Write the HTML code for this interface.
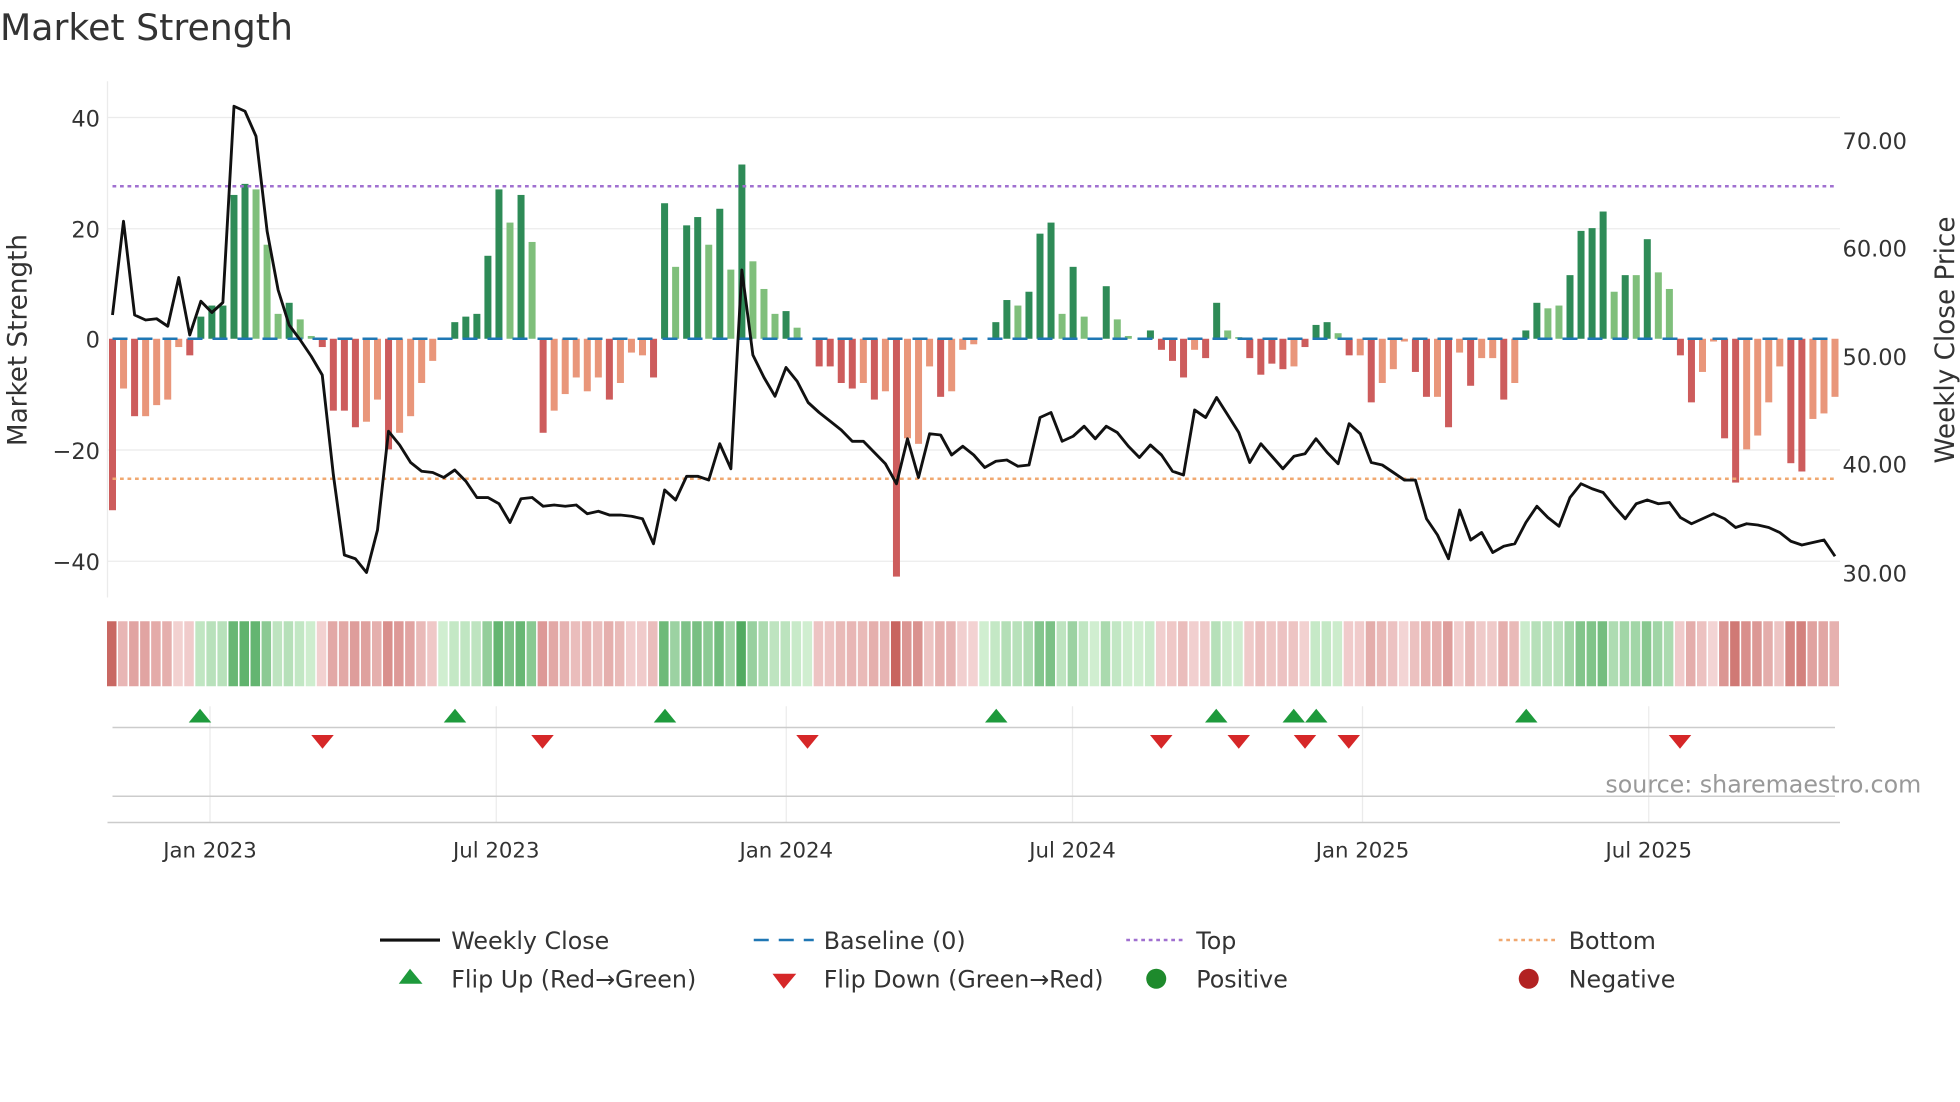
<!DOCTYPE html>
<html><head><meta charset="utf-8"><style>
html,body{margin:0;padding:0;background:#fff;}
svg{display:block;font-family:"DejaVu Sans","Liberation Sans",sans-serif;}
</style></head><body>
<svg id="s" width="1960" height="1102" viewBox="0 0 1568 881.6" xmlns="http://www.w3.org/2000/svg">
<rect width="1568" height="882" fill="#fff"/>
<text x="0" y="32" font-size="29" fill="#333">Market Strength</text>
<g stroke="#ebebeb" stroke-width="1">
<line x1="86" y1="94" x2="1472" y2="94"/><line x1="86" y1="183" x2="1472" y2="183"/>
<line x1="86" y1="360" x2="1472" y2="360"/><line x1="86" y1="449" x2="1472" y2="449"/>
<line x1="86" y1="65" x2="86" y2="478"/>
</g>
<g font-size="18" fill="#333" text-anchor="end">
<text x="80" y="101">40</text><text x="80" y="190">20</text><text x="80" y="278">0</text>
<text x="80" y="367">−20</text><text x="80" y="456">−40</text>
</g>
<g font-size="18" fill="#333">
<text x="1474" y="119">70.00</text><text x="1474" y="205">60.00</text><text x="1474" y="292">50.00</text>
<text x="1474" y="378">40.00</text><text x="1474" y="465">30.00</text>
</g>
<text transform="translate(21,272) rotate(-90)" font-size="21" fill="#333" text-anchor="middle">Market Strength</text>
<text transform="translate(1563,272) rotate(-90)" font-size="21" fill="#333" text-anchor="middle">Weekly Close Price</text>
<g id="bars"></g>
<line x1="90" y1="149" x2="1470" y2="149" stroke="#a070d0" stroke-width="2" stroke-dasharray="3,3"/>
<line x1="90" y1="383" x2="1470" y2="383" stroke="#f0a870" stroke-width="2" stroke-dasharray="3,3"/>
<line x1="90" y1="271" x2="1470" y2="271" stroke="#1f77b4" stroke-width="2" stroke-dasharray="12,8"/>
<polyline id="price" fill="none" stroke="#111" stroke-width="2.3" stroke-linejoin="round"/>
<g id="heat"></g>
<g stroke="#ebebeb"><line x1="168" y1="565" x2="168" y2="658"/><line x1="397" y1="565" x2="397" y2="658"/><line x1="629" y1="565" x2="629" y2="658"/><line x1="858" y1="565" x2="858" y2="658"/><line x1="1090" y1="565" x2="1090" y2="658"/><line x1="1319" y1="565" x2="1319" y2="658"/></g>
<line x1="90" y1="582" x2="1468" y2="582" stroke="#ccc" stroke-width="1.2"/>
<line x1="90" y1="637" x2="1468" y2="637" stroke="#ccc" stroke-width="1.2"/>
<line x1="86" y1="658" x2="1472" y2="658" stroke="#ccc" stroke-width="1.2"/>
<g id="flips"></g>
<text x="1537" y="634" font-size="19" fill="#999" text-anchor="end">source: sharemaestro.com</text>
<g font-size="17" fill="#333" text-anchor="middle">
<text x="168" y="686">Jan 2023</text><text x="397" y="686">Jul 2023</text><text x="629" y="686">Jan 2024</text>
<text x="858" y="686">Jul 2024</text><text x="1090" y="686">Jan 2025</text><text x="1319" y="686">Jul 2025</text>
</g>
<g font-size="19" fill="#333">
<line x1="304" y1="752" x2="352" y2="752" stroke="#111" stroke-width="2.5"/><text x="361" y="759">Weekly Close</text>
<line x1="603" y1="752" x2="651" y2="752" stroke="#1f77b4" stroke-width="2" stroke-dasharray="12,8"/><text x="659" y="759">Baseline (0)</text>
<line x1="901" y1="752" x2="947" y2="752" stroke="#a070d0" stroke-width="2" stroke-dasharray="3,3"/><text x="957" y="759">Top</text>
<line x1="1199" y1="752" x2="1245" y2="752" stroke="#f0a870" stroke-width="2" stroke-dasharray="3,3"/><text x="1255" y="759">Bottom</text>
<polygon points="328,775 319,787 338,787" fill="#1e9a3c"/><text x="361" y="790">Flip Up (Red→Green)</text>
<polygon points="618,779 637,779 627,791" fill="#d62728"/><text x="659" y="790">Flip Down (Green→Red)</text>
<circle cx="925" cy="783" r="8" fill="#1e8a2c"/><text x="957" y="790">Positive</text>
<circle cx="1223" cy="783" r="8" fill="#b22222"/><text x="1255" y="790">Negative</text>
</g>
</svg>
<script>
var V=[[-31,1],[-9,0],[-14,1],[-14,0],[-12,0],[-11,0],[-1.5,0],[-3,1],[4,1],[6,1],[6,1],[26,1],[28,1],[27,0],[17,0],[4.5,0],[6.5,1],[3.5,0],[0.5,0],[-1.5,1],[-13,1],[-13,1],[-16,1],[-15,0],[-11,0],[-20,1],[-17,0],[-14,0],[-8,0],[-4,0],[0,0],[3,1],[4,1],[4.5,1],[15,1],[27,1],[21,0],[26,1],[17.5,0],[-17,1],[-13,0],[-10,0],[-7,0],[-9.5,0],[-7,0],[-11,1],[-8,0],[-2.5,0],[-3,0],[-7,1],[24.5,1],[13,0],[20.5,1],[22,1],[17,0],[23.5,1],[12.5,0],[31.5,1],[14,0],[9,0],[4.5,0],[5,1],[2,0],[0,0],[-5,1],[-5,1],[-8,1],[-9,1],[-8,0],[-11,1],[-9.5,0],[-43,1],[-18,0],[-19,0],[-5,0],[-10.5,1],[-9.5,0],[-2,0],[-1,0],[0,0],[3,1],[7,1],[6,0],[8.5,1],[19,1],[21,1],[4.5,0],[13,1],[4,0],[0,0],[9.5,1],[3.5,0],[0.5,0],[0,0],[1.5,1],[-2,1],[-4,1],[-7,1],[-2,0],[-3.5,1],[6.5,1],[1.5,0],[0.3,0],[-3.5,1],[-6.5,1],[-4.5,1],[-5.5,1],[-5,0],[-1.5,1],[2.5,1],[3,1],[1,0],[-3,1],[-3,0],[-11.5,1],[-8,0],[-5.5,0],[-0.5,0],[-6,1],[-10.5,1],[-10.5,0],[-16,1],[-2.5,0],[-8.5,1],[-3.5,0],[-3.5,0],[-11,1],[-8,0],[1.5,1],[6.5,1],[5.5,0],[6,0],[11.5,1],[19.5,1],[20,1],[23,1],[8.5,0],[11.5,1],[11.5,0],[18,1],[12,0],[9,0],[-3,1],[-11.5,1],[-6,0],[-0.5,0],[-18,1],[-26,1],[-20,0],[-17.5,0],[-11.5,0],[-5,0],[-22.5,1],[-24,1],[-14.5,0],[-13.5,0],[-10.5,0]];
var n=V.length,x0=90,x1=1468,st=(x1-x0)/(n-1),ns="http://www.w3.org/2000/svg";
var b=document.getElementById('bars'),h=document.getElementById('heat');
function el(p,t,a){var e=document.createElementNS(ns,t);for(var k in a)e.setAttribute(k,a[k]);p.appendChild(e);}
function mix(c1,c2,t){return 'rgb('+c1.map(function(v,i){return Math.round(v+(c2[i]-v)*t)}).join(',')+')';}
V.forEach(function(d,i){var x=x0+i*st,v=d[0],c;
 if(v>=0)c=d[1]?'#2e8b57':'#7fbf7b';else c=d[1]?'#cd5c5c':'#e9967a';
 var y=271-v*4.425;el(b,'rect',{x:x-2.8,y:Math.min(y,271),width:5.6,height:Math.abs(271-y),fill:c});
 var t=Math.min(Math.abs(v)/32,1),hc=v>=0?mix([208,238,208],[80,170,95],t):mix([244,214,214],[200,100,95],t);
 el(h,'rect',{x:x-4.4,y:497,width:7.6,height:52,fill:hc});
});
var P=[252,177,252,256,255,261,222,268,241,250,242,85,89,109,185,232,260,272,285,300,380,444,447,458,424,345,356,370,377,378,382,376,385,398,398,403,418,399,398,405,404,405,404,411,409,412,412,413,415,435,392,400,381,381,384,355,375,216,284,302,317,294,305,322,330,337,344,353,353,362,371,387,351,382,347,348,364,357,364,374,369,368,373,372,334,330,353,349,341,351,341,346,357,366,356,364,377,380,328,334,318,332,346,370,355,365,375,365,363,351,362,371,339,347,370,372,378,384,384,415,428,447,408,432,426,442,437,435,418,405,414,421,398,387,391,394,405,415,403,400,403,402,414,419,415,411,415,422,419,420,422,426,433,436,434,432,445];
var ps=(x1-x0)/(P.length-1);document.getElementById('price').setAttribute('points',P.map(function(y,i){return (x0+i*ps).toFixed(1)+','+y}).join(' '));
var f=document.getElementById('flips');
[160,364,532,797,973,1035,1053,1221].forEach(function(x){el(f,'polygon',{points:(x)+',567 '+(x-9)+',578 '+(x+9)+',578',fill:'#1e9a3c'})});
[258,434,646,929,991,1044,1079,1344].forEach(function(x){el(f,'polygon',{points:(x-9)+',588 '+(x+9)+',588 '+x+',599',fill:'#d62728'})});
</script>
</body></html>
